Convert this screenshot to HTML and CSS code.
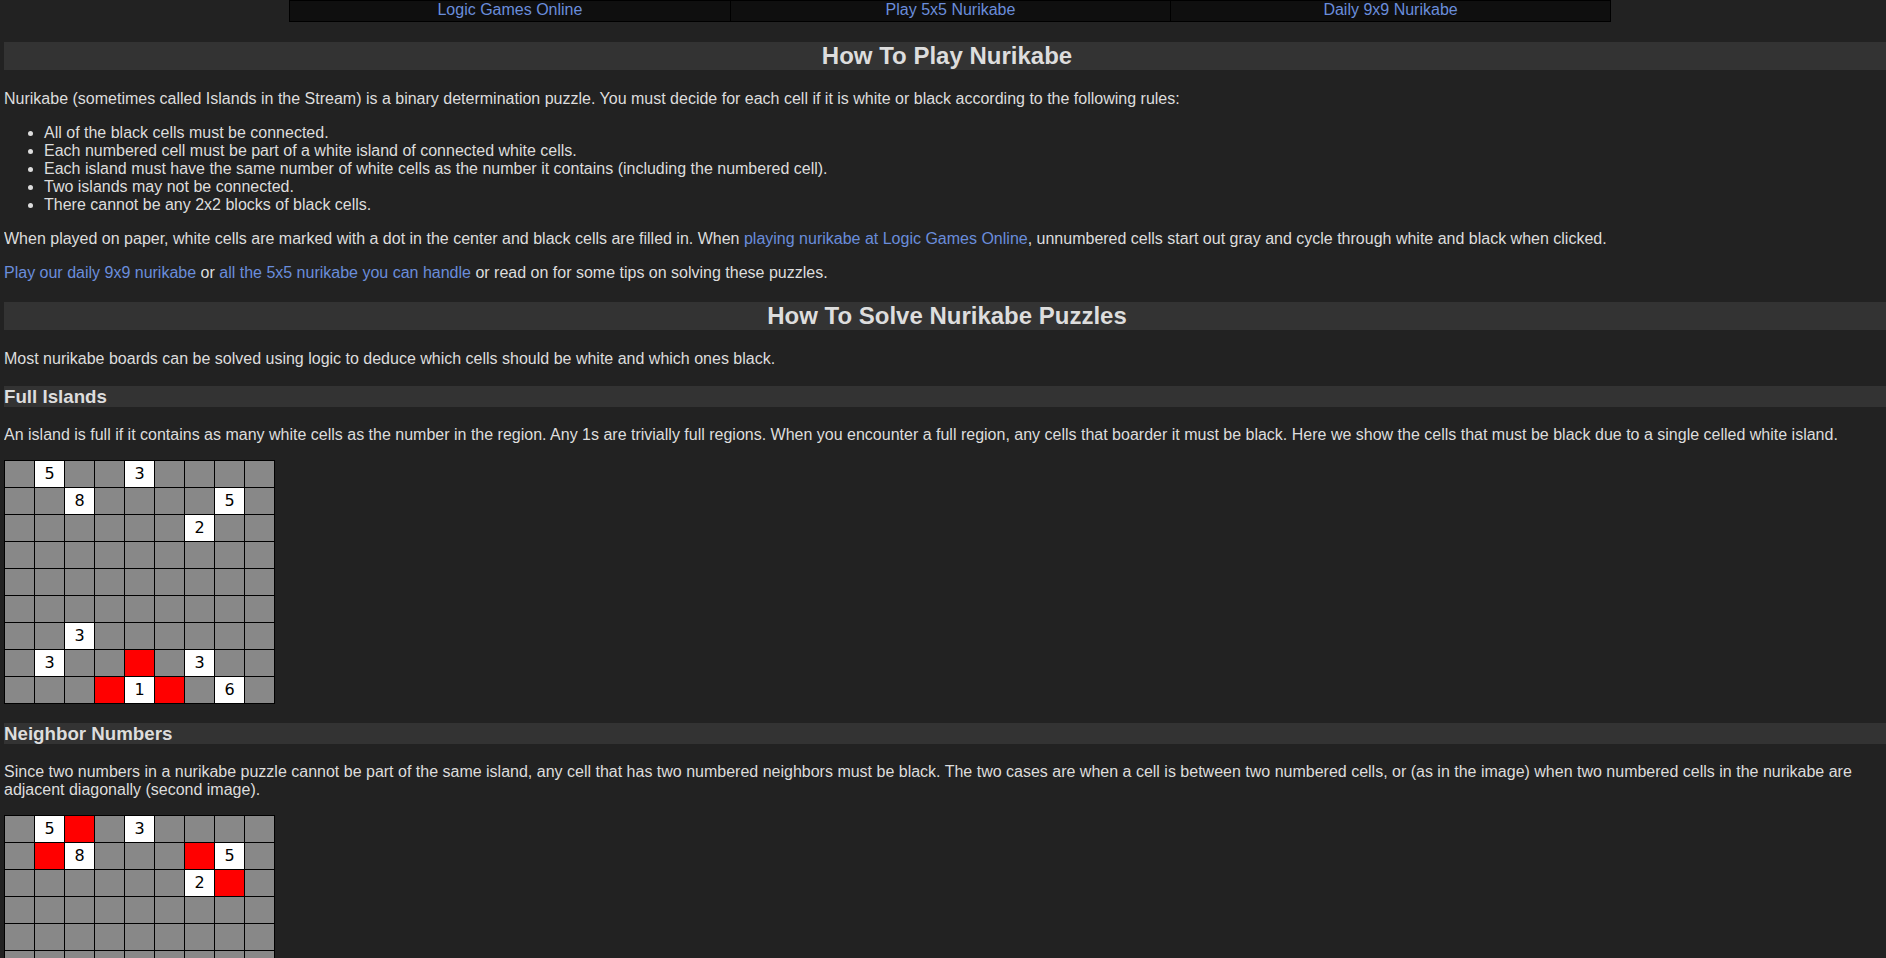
FILE: index.html
```html
<!DOCTYPE html>
<html lang="en">
<head>
<meta charset="utf-8">
<title>How To Play Nurikabe</title>
<link rel="stylesheet" href="styles.css">
</head>
<body>
<nav class="topnav">
  <a href="#">Logic Games Online</a>
  <a href="#">Play 5x5 Nurikabe</a>
  <a href="#">Daily 9x9 Nurikabe</a>
</nav>

<h2 class="band">How To Play Nurikabe</h2>
<p>Nurikabe (sometimes called Islands in the Stream) is a binary determination puzzle. You must decide for each cell if it is white or black according to the following rules:</p>
<ul>
  <li>All of the black cells must be connected.</li>
  <li>Each numbered cell must be part of a white island of connected white cells.</li>
  <li>Each island must have the same number of white cells as the number it contains (including the numbered cell).</li>
  <li>Two islands may not be connected.</li>
  <li>There cannot be any 2x2 blocks of black cells.</li>
</ul>
<p>When played on paper, white cells are marked with a dot in the center and black cells are filled in. When <a href="#">playing nurikabe at Logic Games Online</a>, unnumbered cells start out gray and cycle through white and black when clicked.</p>
<p><a href="#">Play our daily 9x9 nurikabe</a> or <a href="#">all the 5x5 nurikabe you can handle</a> or read on for some tips on solving these puzzles.</p>

<h2 class="band">How To Solve Nurikabe Puzzles</h2>
<p>Most nurikabe boards can be solved using logic to deduce which cells should be white and which ones black.</p>

<h3 class="band left">Full Islands</h3>
<p>An island is full if it contains as many white cells as the number in the region. Any 1s are trivially full regions. When you encounter a full region, any cells that boarder it must be black. Here we show the cells that must be black due to a single celled white island.</p>
<div class="board">
  <div></div><div class="w">5</div><div></div><div></div><div class="w">3</div><div></div><div></div><div></div><div></div>
  <div></div><div></div><div class="w">8</div><div></div><div></div><div></div><div></div><div class="w">5</div><div></div>
  <div></div><div></div><div></div><div></div><div></div><div></div><div class="w">2</div><div></div><div></div>
  <div></div><div></div><div></div><div></div><div></div><div></div><div></div><div></div><div></div>
  <div></div><div></div><div></div><div></div><div></div><div></div><div></div><div></div><div></div>
  <div></div><div></div><div></div><div></div><div></div><div></div><div></div><div></div><div></div>
  <div></div><div></div><div class="w">3</div><div></div><div></div><div></div><div></div><div></div><div></div>
  <div></div><div class="w">3</div><div></div><div></div><div class="r"></div><div></div><div class="w">3</div><div></div><div></div>
  <div></div><div></div><div></div><div class="r"></div><div class="w">1</div><div class="r"></div><div></div><div class="w">6</div><div></div>
</div>

<h3 class="band left">Neighbor Numbers</h3>
<p>Since two numbers in a nurikabe puzzle cannot be part of the same island, any cell that has two numbered neighbors must be black. The two cases are when a cell is between two numbered cells, or (as in the image) when two numbered cells in the nurikabe are adjacent diagonally (second image).</p>
<div class="board">
  <div></div><div class="w">5</div><div class="r"></div><div></div><div class="w">3</div><div></div><div></div><div></div><div></div>
  <div></div><div class="r"></div><div class="w">8</div><div></div><div></div><div></div><div class="r"></div><div class="w">5</div><div></div>
  <div></div><div></div><div></div><div></div><div></div><div></div><div class="w">2</div><div class="r"></div><div></div>
  <div></div><div></div><div></div><div></div><div></div><div></div><div></div><div></div><div></div>
  <div></div><div></div><div></div><div></div><div></div><div></div><div></div><div></div><div></div>
  <div></div><div></div><div></div><div></div><div></div><div></div><div></div><div></div><div></div>
  <div></div><div class="r"></div><div class="w">3</div><div></div><div></div><div></div><div></div><div></div><div></div>
  <div></div><div class="w">3</div><div class="r"></div><div></div><div></div><div></div><div class="w">3</div><div class="r"></div><div></div>
  <div></div><div></div><div></div><div></div><div class="w">1</div><div></div><div class="r"></div><div class="w">6</div><div></div>
</div>
</body>
</html>
```

FILE: styles.css
```css
html {
  overflow-x: hidden;
  background: #222222;
}

body {
  margin: 0 0 0 4px;
  width: 100%;
  background: #222222;
  color: #dddddd;
  font-family: "Liberation Sans", Arial, sans-serif;
  font-size: 16px;
  line-height: 1.125;
}

a {
  color: #6a8ddb;
  text-decoration: none;
}

.topnav {
  display: grid;
  grid-template-columns: 1fr 1fr 1fr;
  width: 70%;
  margin: 0 0 0 calc(15% + 2px);
  border: 1px solid #000;
  background: #0f0f0f;
}

.topnav a {
  display: block;
  text-align: center;
  line-height: 18px;
  padding-bottom: 2px;
}

.topnav a + a {
  border-left: 1px solid #000;
}

.band {
  background: #333333;
  color: #dddddd;
  font-weight: bold;
}

h2.band {
  font-size: 24px;
  line-height: 28px;
  text-align: center;
  margin: 19.92px 0;
}

h3.band {
  font-size: 18.72px;
  line-height: 21px;
  margin: 18.72px 0;
}

p {
  margin: 16px 0;
}

ul {
  margin: 16px 0;
  padding-left: 40px;
}

.board {
  display: grid;
  grid-template-columns: repeat(9, 29px);
  grid-auto-rows: 26px;
  gap: 1px;
  padding: 1px;
  background: #000;
  width: fit-content;
  margin: 16px 0;
}

.board div {
  background: #888888;
  color: #000;
  font-family: "DejaVu Sans", sans-serif;
  font-size: 16px;
  display: flex;
  align-items: center;
  justify-content: center;
}

.board div.w {
  background: #ffffff;
}

.board div.r {
  background: #ff0000;
}
```
